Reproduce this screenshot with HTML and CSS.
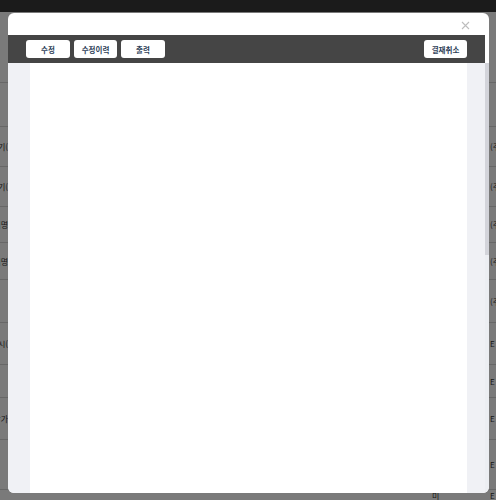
FILE: index.html
```html
<!DOCTYPE html>
<html lang="ko">
<head>
<meta charset="utf-8">
<title>결재 문서</title>
<link rel="stylesheet" href="styles.css">
</head>
<body>
<div class="page">
  <div class="topbar"></div>
  <div class="rows">
    <div class="row h71"><span class="lc"></span><span class="rc"></span></div>
    <div class="row h44"><span class="lc"></span><span class="rc"></span></div>
    <div class="row h40"><span class="lc"><span>사용기(</span></span><span class="rc">(주</span></div>
    <div class="row h40"><span class="lc"><span>사용기(</span></span><span class="rc">(주</span></div>
    <div class="row h36"><span class="lc"><span>거래명</span></span><span class="rc">(주</span></div>
    <div class="row h37"><span class="lc"><span>거래명</span></span><span class="rc">(주</span></div>
    <div class="row h43"><span class="lc"></span><span class="rc">(주</span></div>
    <div class="row h42"><span class="lc"><span>등록시(</span></span><span class="rc">E</span></div>
    <div class="row h33"><span class="lc"></span><span class="rc">E</span></div>
    <div class="row h42"><span class="lc"><span>참가</span></span><span class="rc">E</span></div>
    <div class="row h50"><span class="lc"></span><span class="rc">E</span></div>
    <div class="row h10 last"><span class="lc"></span><span class="mid">미</span><span class="rc">E</span></div>
  </div>
</div>
<div class="dim"></div>
<div class="modal">
  <div class="modal-head">
    <button class="close" aria-label="닫기">
      <svg width="9" height="9" viewBox="0 0 9 9"><path d="M1 1L8 8M8 1L1 8" stroke="#bdbdbd" stroke-width="1.1" fill="none"/></svg>
    </button>
  </div>
  <div class="toolbar">
    <div class="group">
      <button class="btn w44">수정</button>
      <button class="btn w43">수정이력</button>
      <button class="btn w44">출력</button>
    </div>
    <button class="btn w43">결재취소</button>
  </div>
  <div class="body">
    <div class="gutter"></div>
    <div class="sheet"></div>
    <div class="gutter-r"></div>
    <div class="scrollbar"><div class="thumb"></div></div>
  </div>
</div>
</body>
</html>
```

FILE: styles.css
```css
* { box-sizing: border-box; }
html, body { margin: 0; padding: 0; }
body {
  width: 496px;
  height: 500px;
  overflow: hidden;
  font-family: "Noto Sans CJK KR", "Noto Sans", sans-serif;
  background: #ffffff;
}
.page { width: 496px; height: 500px; overflow: hidden; }
.topbar { height: 12px; background: #3a3a3a; }
.rows { display: flex; flex-direction: column; }
.row {
  display: flex;
  align-items: center;
  border-bottom: 1px solid #d8d8d8;
  font-size: 8px;
  color: #333;
}
.h71 { height: 71px; }
.h44 { height: 44px; }
.h43 { height: 43px; }
.h42 { height: 42px; }
.h40 { height: 40px; }
.h37 { height: 37px; }
.h36 { height: 36px; }
.h33 { height: 33px; }
.h50 { height: 50px; }
.h10 { height: 10px; border-bottom: 0; }
.row.last { align-items: flex-start; padding-top: 1px; }
.lc {
  width: 8px;
  overflow: hidden;
  display: flex;
  justify-content: flex-end;
  white-space: nowrap;
}
.lc span { flex: none; }
.mid { margin-left: 424px; width: 58px; line-height: 9px; }
.rc {
  margin-left: auto;
  width: 6px;
  overflow: hidden;
  white-space: nowrap;
  line-height: 9px;
}
.dim {
  position: fixed;
  inset: 0;
  background: rgba(0, 0, 0, 0.52);
}
.modal {
  position: fixed;
  left: 8px;
  top: 13px;
  width: 481px;
  height: 480px;
  background: #ffffff;
  border-radius: 6px;
  overflow: hidden;
  display: flex;
  flex-direction: column;
}
.modal-head {
  height: 22px;
  flex: none;
  display: flex;
  justify-content: flex-end;
  align-items: center;
  padding-right: 19px;
}
.close {
  border: 0;
  background: none;
  padding: 0;
  width: 9px;
  height: 9px;
  display: flex;
  margin-top: 2px;
}
.toolbar {
  flex: none;
  height: 28px;
  margin-right: 4px;
  background: #454545;
  display: flex;
  align-items: center;
  justify-content: space-between;
  padding: 0 18px;
}
.group { display: flex; gap: 4px; }
.btn {
  height: 18px;
  border: 0;
  border-radius: 3px;
  background: #ffffff;
  color: #2d4058;
  font-family: "Noto Sans CJK KR", "Noto Sans", sans-serif;
  font-size: 7.5px;
  font-weight: 700;
  padding: 0;
  display: flex;
  align-items: center;
  justify-content: center;
  white-space: nowrap;
}
.w44 { width: 44px; }
.w43 { width: 43px; }
.body {
  flex: 1;
  display: flex;
  min-height: 0;
}
.gutter { width: 22px; background: #f0f1f5; }
.sheet { flex: 1; background: #ffffff; }
.gutter-r { width: 18px; background: #f0f1f5; }
.scrollbar { width: 4px; background: #eceef2; }
.thumb { height: 192px; background: #d3d4da; }
```
